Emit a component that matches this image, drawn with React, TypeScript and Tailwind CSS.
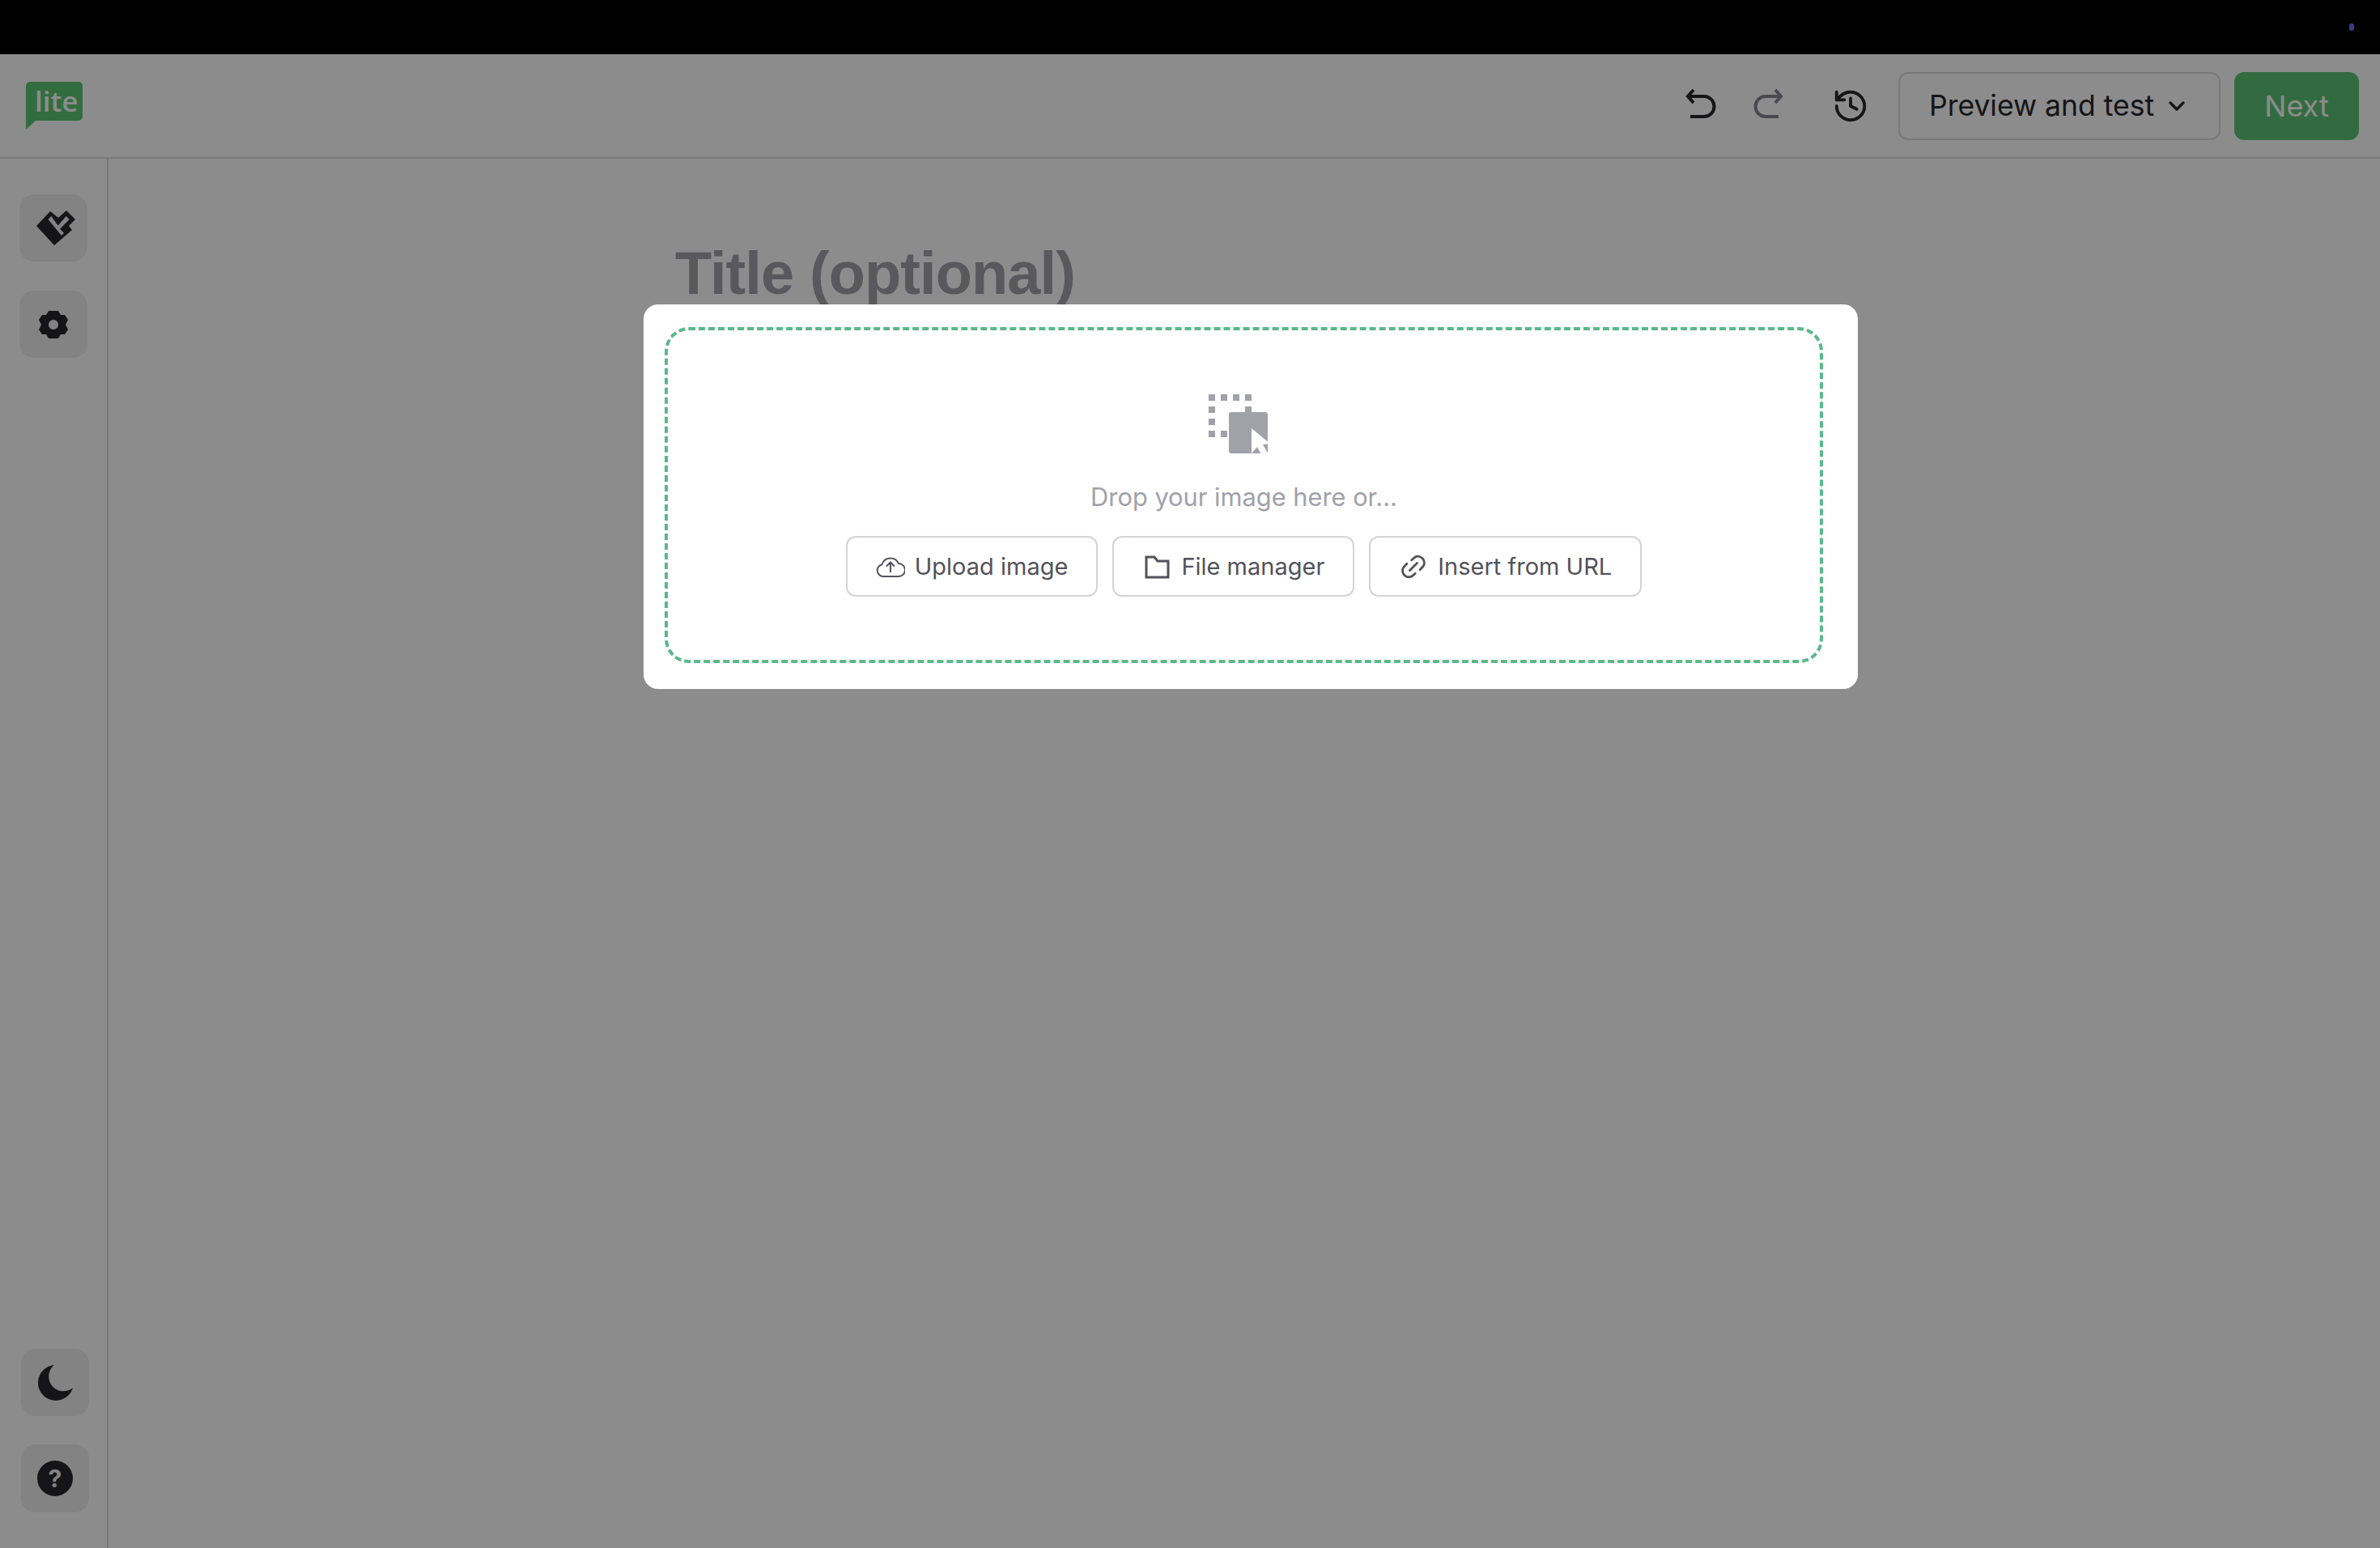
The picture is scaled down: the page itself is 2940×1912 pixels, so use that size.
import { ChevronDown, History } from 'lucide-react'

const SIDE_TOP = [
  <svg key="brush" viewBox="0 0 54 48" className="ml-[6px] h-[48px] w-[54px] fill-[#27272a]">
    <path
      fillRule="evenodd"
      strokeLinejoin="round"
      d="M3 21 L20 3 L30 11 L40 2 L51 13 L43 21 L47 26 L25 45 Z M17.5 13 L21.3 9 L29.7 20.5 L39.7 9 L43.7 13 L32 24.7 L37 29.7 L34 33 Z"
    />
  </svg>,
  <svg key="gear" viewBox="0 0 38 36" className="h-[36px] w-[38px] fill-[#27272a]">
    <path fillRule="evenodd" d="M13 1 h12 l3 5 h5 l4 6 -3 6 3 6 -4 6 h-5 l-3 5 h-12 l-3 -5 h-5 l-4 -6 3 -6 -3 -6 4 -6 h5 Z M19 12 a6 6 0 1 0 0.01 0 Z" />
  </svg>,
]

const BUTTONS = [
  {
    label: 'Upload image',
    icon: (
      <svg viewBox="0 0 36 36" className="h-[36px] w-[36px] fill-none stroke-current stroke-[2]">
        <path d="M9 30 a7.5 7.5 0 0 1 -1.5 -14.8 A11 11 0 0 1 28 14 a8 8 0 0 1 0 16 Z" />
        <path d="M18 25 V13 M13 17.5 L18 12.5 L23 17.5" />
      </svg>
    ),
  },
  {
    label: 'File manager',
    icon: (
      <svg viewBox="0 0 36 36" className="h-[36px] w-[36px] fill-none stroke-current stroke-[3]">
        <path d="M5 6 H15 L19 11 H32 V31 H5 Z" />
      </svg>
    ),
  },
  {
    label: 'Insert from URL',
    icon: (
      <svg viewBox="0 0 24 24" className="h-[36px] w-[36px] fill-none stroke-current stroke-[1.9]" strokeLinecap="round">
        <path d="M10.5 6.5 l2.5 -2.2 a5.2 5.2 0 0 1 7 7.4 l-2.6 2.8" />
        <path d="M13.5 17.5 l-2.5 2.2 a5.2 5.2 0 0 1 -7 -7.4 l2.6 -2.8" />
        <path d="M9 15 L15 9" />
      </svg>
    ),
  },
]

export default function App() {
  return (
    <div className="relative h-[1912px] w-[2940px] overflow-hidden bg-white font-['Inter',sans-serif] text-[#27272a]">
      {/* barra preta */}
      <div className="relative z-20 flex h-[67px] items-center justify-end bg-black pr-[32px]">
        <span className="h-[9px] w-[6px] rounded-full bg-[#3c3a8c]" />
      </div>

      {/* header */}
      <header className="flex h-[129px] items-center justify-between border-b-2 border-[#dcdcdf] pl-[32px] pr-[26px]">
        <svg viewBox="0 0 70 60" className="h-[60px] w-[70px]">
          <path d="M5 0 H65 a5 5 0 0 1 5 5 V43 a5 5 0 0 1 -5 5 H12 L0 59 V5 a5 5 0 0 1 5 -5 Z" fill="#5cc775" />
          <text x="11" y="37" fontSize="35" fontWeight="600" fill="#ffffff" fontFamily="'Open Sans', sans-serif">lite</text>
        </svg>
        <div className="flex items-center">
          <svg viewBox="0 0 40 40" className="-mt-[6px] h-[40px] w-[40px] fill-none stroke-[#27272a] stroke-[4]">
            <path d="M11 3 L4 11 L11 19 M4 11 H24 a12.5 12.5 0 0 1 0 25 H7" />
          </svg>
          <svg viewBox="0 0 40 40" className="-mt-[6px] ml-[44px] h-[40px] w-[40px] fill-none stroke-[#85858d] stroke-[4]">
            <path d="M28 3 L35 11 L28 19 M35 11 H16 a12.5 12.5 0 0 0 0 25 H32" />
          </svg>
          <History size={46} strokeWidth={2} className="ml-[58px]" />
          <button className="ml-[36px] flex h-[84px] w-[398px] items-center justify-center gap-[12px] rounded-[12px] border-2 border-[#dcdcdf] text-[35.5px]">
            Preview and test <ChevronDown size={32} strokeWidth={2.5} />
          </button>
          <button className="ml-[17px] flex h-[84px] w-[154px] items-center justify-center rounded-[12px] bg-[#5dc476] text-[36px] text-white">
            Next
          </button>
        </div>
      </header>

      <div className="flex h-[1716px]">
        {/* sidebar */}
        <aside className="flex w-[134px] shrink-0 flex-col justify-between border-r-2 border-[#dcdcdf] pb-[44px] pl-[24px] pt-[44px]">
          <div className="flex flex-col gap-[36px]">
            {SIDE_TOP.map((icon, i) => (
              <div key={i} className="flex h-[83px] w-[84px] items-center justify-center rounded-[18px] bg-[#eeeeef]">
                {icon}
              </div>
            ))}
          </div>
          <div className="ml-[2px] flex flex-col gap-[35px]">
            <div className="flex h-[83px] w-[84px] items-center justify-center rounded-[18px] bg-[#eeeeef]">
              <svg viewBox="0 0 44 44" className="h-[46px] w-[46px] fill-[#27272a]">
                <path d="M21 1 A21 21 0 1 0 43 28 A17 17 0 0 1 21 1 Z" />
              </svg>
            </div>
            <div className="flex h-[84px] w-[84px] items-center justify-center rounded-[18px] bg-[#eeeeef]">
              <div className="flex h-[44px] w-[44px] items-center justify-center rounded-full bg-[#27272a] text-[30px] font-bold leading-none text-[#eeeeef]">
                ?
              </div>
            </div>
          </div>
        </aside>

        <main className="flex-1 pl-[700px] pt-[101px]">
          <h1 className="font-['Liberation_Sans',sans-serif] text-[74px] font-bold leading-[1.1] tracking-[-0.9px] text-[#a1a1aa]">
            Title (optional)
          </h1>
        </main>
      </div>

      {/* overlay + modal */}
      <div className="absolute inset-0 top-[67px] z-10 bg-black/45" />
      <div className="absolute left-[795px] top-[376px] z-30 h-[475px] w-[1500px] rounded-[18px] bg-white pb-[32px] pl-[26px] pr-[43px] pt-[28px]">
        <div className="flex h-full flex-col items-center rounded-[30px] border-[4px] border-dashed border-[#5ab88a] pt-[79px]">
          <svg viewBox="0 0 76 76" className="mr-[12px] h-[76px] w-[76px] fill-[#a1a1aa]">
            <path d="M0 0h8v8H0zM15 0h8v8h-8zM30 0h8v8h-8zM45 0h8v8h-8zM0 15h8v8H0zM0 30h8v8H0zM0 45h8v8H0zM45 15h8v7h-8zM15 45h8v8h-8z" />
            <path d="M25 25 a3 3 0 0 1 3 -3 H70 a3 3 0 0 1 3 3 V70 a3 3 0 0 1 -3 3 H28 a3 3 0 0 1 -3 -3 Z" />
            <path d="M53 42 L53 73 L60 65 L66 76 L73 73 L67 62 L76 61 Z" className="fill-white" />
          </svg>
          <p className="mt-[31px] text-[30.8px] leading-[40px] text-[#a1a1aa]">Drop your image here or...</p>
          <div className="mt-[28px] flex gap-[18px]">
            {BUTTONS.map(b => (
              <button key={b.label} className="flex h-[75px] items-center gap-[12px] rounded-[12px] border-2 border-[#d4d4d8] px-[35px] text-[29px] text-[#52525b]">
                {b.icon}
                {b.label}
              </button>
            ))}
          </div>
        </div>
      </div>
    </div>
  )
}
